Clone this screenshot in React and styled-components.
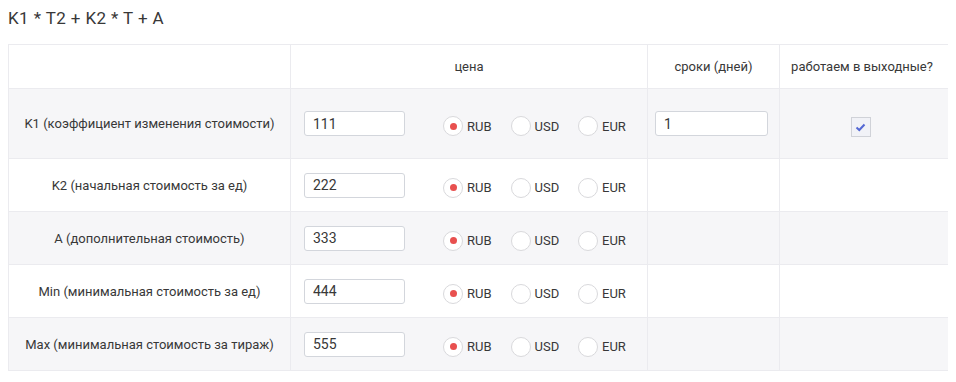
import React, { useState } from "react";
import styled, { createGlobalStyle } from "styled-components";

const GlobalStyle = createGlobalStyle`
  html {
    overflow: hidden;
  }
  body {
    margin: 8px;
    font-family: Roboto, "Noto Sans", sans-serif;
    color: #333;
    background: #fff;
  }
`;

const Title = styled.h3`
  margin: 0 0 16px;
  font-size: 17px;
  line-height: 20px;
  letter-spacing: 0.4px;
  font-weight: 400;
  color: #383838;
`;

const Table = styled.div`
  display: grid;
  grid-template-columns: 282px 357px 132px 1fr;
  width: 960px;
  border-top: 1px solid #ebebef;
  border-left: 1px solid #ebebef;
  box-sizing: border-box;
  font-size: 13px;
`;

const Row = styled.div`
  display: contents;
`;

const Cell = styled.div`
  display: flex;
  align-items: center;
  justify-content: ${(p) => p.$justify || "center"};
  box-sizing: border-box;
  height: ${(p) => p.$height}px;
  padding: ${(p) => p.$pad || "0"};
  background: ${(p) => (p.$gray ? "#f6f6f8" : "#fff")};
  border-bottom: 1px solid #ebebef;
  border-right: ${(p) => (p.$last ? "none" : "1px solid #ebebef")};
  color: #383838;
`;

const TextInput = styled.input`
  box-sizing: border-box;
  width: ${(p) => p.$width}px;
  height: 25px;
  padding: 0 8px;
  border: 1px solid #d3d6dc;
  border-radius: 3px;
  background: #fff;
  font-family: Roboto, sans-serif;
  font-size: 14px;
  color: #383838;
  outline: none;
`;

const RadioGroup = styled.div`
  display: flex;
  align-items: center;
  margin-left: 38px;
  margin-top: 5px;
`;

const Option = styled.label`
  display: flex;
  align-items: center;
  gap: 4px;
  width: 67.5px;
  cursor: pointer;
  font-size: 13px;
  color: #383838;
`;

const RadioCircle = styled.span`
  position: relative;
  box-sizing: border-box;
  width: 20px;
  height: 20px;
  border-radius: 50%;
  border: 1px solid #d9d9dc;
  background: #fff;

  &::after {
    content: "";
    display: ${(p) => (p.$checked ? "block" : "none")};
    position: absolute;
    left: 50%;
    top: 50%;
    width: 7px;
    height: 7px;
    margin: -3.5px 0 0 -3.5px;
    border-radius: 50%;
    background: #e8504f;
  }
`;

const CheckBox = styled.span`
  display: flex;
  align-items: center;
  justify-content: center;
  box-sizing: border-box;
  width: 20px;
  height: 20px;
  margin-top: 7px;
  border: 1px solid #d0d2d8;
  background: #f1f2f7;
`;

const currencies = ["RUB", "USD", "EUR"];

const rows = [
  { label: "K1 (коэффициент изменения стоимости)", value: "111", first: true },
  { label: "K2 (начальная стоимость за ед)", value: "222" },
  { label: "A (дополнительная стоимость)", value: "333" },
  { label: "Min (минимальная стоимость за ед)", value: "444" },
  { label: "Max (минимальная стоимость за тираж)", value: "555" },
];

const Currency = ({ value, onChange }) => (
  <RadioGroup>
    {currencies.map((c) => (
      <Option key={c} onClick={() => onChange(c)}>
        <RadioCircle $checked={value === c} />
        {c}
      </Option>
    ))}
  </RadioGroup>
);

const PriceRow = ({ row, gray }) => {
  const [cur, setCur] = useState("RUB");
  const h = row.first ? 70 : 53;

  return (
    <Row>
      <Cell $height={h} $gray={gray}>{row.label}</Cell>
      <Cell $height={h} $gray={gray} $justify="flex-start" $pad="0 0 0 13px">
        <TextInput $width={101} defaultValue={row.value} />
        <Currency value={cur} onChange={setCur} />
      </Cell>
      <Cell $height={h} $gray={gray} $justify="flex-start" $pad="0 0 0 7px">
        {row.first && <TextInput $width={113} defaultValue="1" />}
      </Cell>
      <Cell $height={h} $gray={gray} $last $pad="0 27px 0 0">
        {row.first && (
          <CheckBox>
            <svg width="11" height="9" viewBox="0 0 11 9">
              <path d="M1.5 4.5 L4.3 7 L9.5 1.5" fill="none" stroke="#5468d4" strokeWidth="2" />
            </svg>
          </CheckBox>
        )}
      </Cell>
    </Row>
  );
};

const App = () => (
  <>
    <GlobalStyle />
    <Title>K1 * T2 + K2 * T + A</Title>
    <Table>
      <Row>
        <Cell $height={44} />
        <Cell $height={44}>цена</Cell>
        <Cell $height={44}>сроки (дней)</Cell>
        <Cell $height={44} $last $pad="0 24px 0 0">работаем в выходные?</Cell>
      </Row>
      {rows.map((r, i) => (
        <PriceRow key={r.value} row={r} gray={i % 2 === 0} />
      ))}
    </Table>
  </>
);

export default App;
